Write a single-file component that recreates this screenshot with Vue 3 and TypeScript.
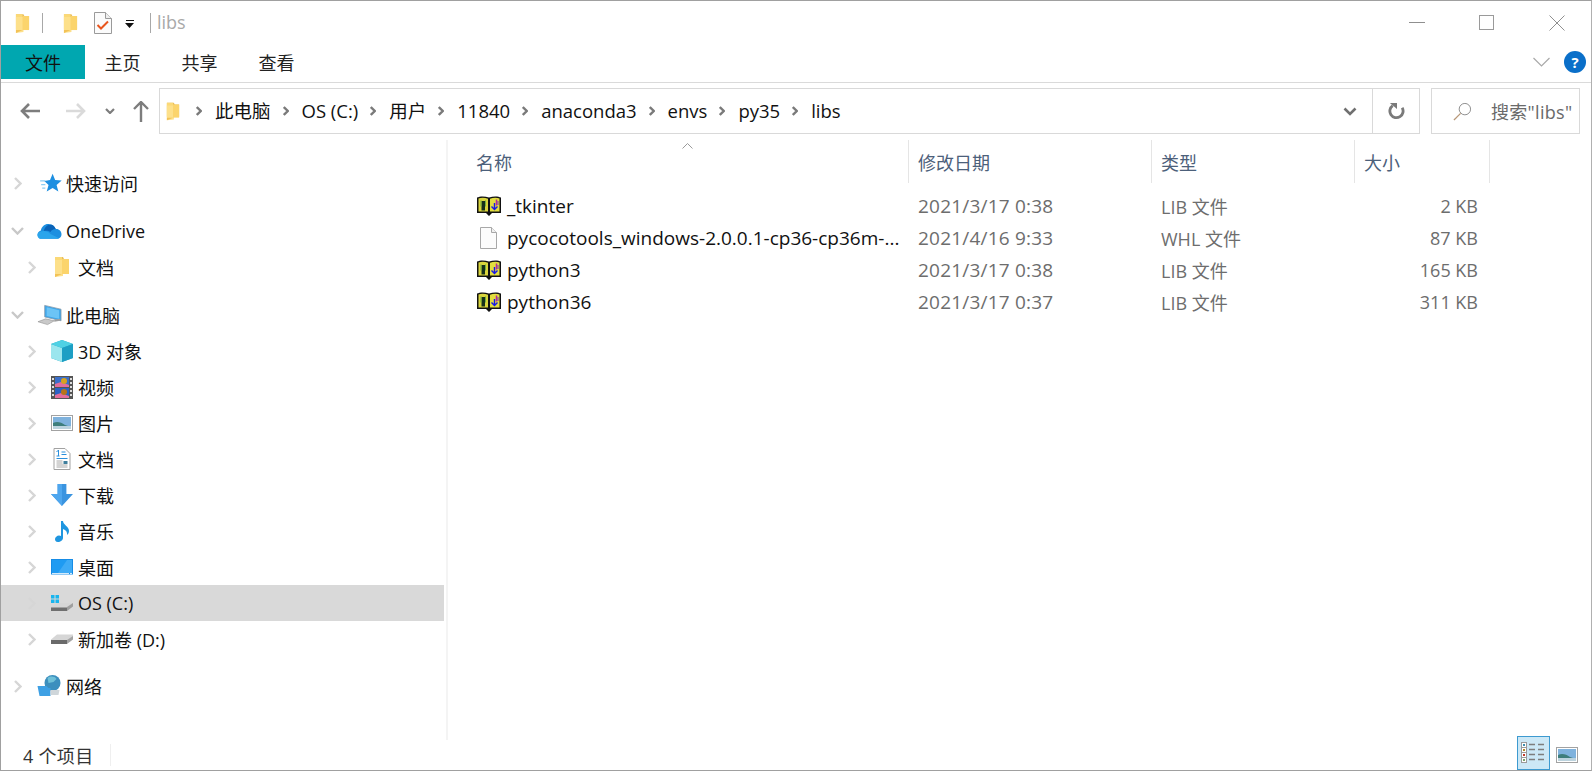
<script setup lang="ts">
interface NavRow { label: string; icon: string; level: number; open?: boolean; selected?: boolean; gap?: boolean }
const crumbs: string[] = ['此电脑', 'OS (C:)', '用户', '11840', 'anaconda3', 'envs', 'py35', 'libs']
const tabs: string[] = ['主页', '共享', '查看']
const nav: NavRow[] = [
  { label: '快速访问', icon: 'star', level: 0 },
  { label: 'OneDrive', icon: 'cloud', level: 0, open: true, gap: true },
  { label: '文档', icon: 'folder', level: 1 },
  { label: '此电脑', icon: 'pc', level: 0, open: true, gap: true },
  { label: '3D 对象', icon: 'cube', level: 1 },
  { label: '视频', icon: 'film', level: 1 },
  { label: '图片', icon: 'photo', level: 1 },
  { label: '文档', icon: 'doc', level: 1 },
  { label: '下载', icon: 'download', level: 1 },
  { label: '音乐', icon: 'music', level: 1 },
  { label: '桌面', icon: 'desktop', level: 1 },
  { label: 'OS (C:)', icon: 'osdrive', level: 1, selected: true },
  { label: '新加卷 (D:)', icon: 'drive', level: 1 },
  { label: '网络', icon: 'net', level: 0, gap: true },
]
const files = [
  { name: '_tkinter', icon: 'book', date: '2021/3/17 0:38', type: 'LIB 文件', size: '2 KB' },
  { name: 'pycocotools_windows-2.0.0.1-cp36-cp36m-...', icon: 'blank', date: '2021/4/16 9:33', type: 'WHL 文件', size: '87 KB' },
  { name: 'python3', icon: 'book', date: '2021/3/17 0:38', type: 'LIB 文件', size: '165 KB' },
  { name: 'python36', icon: 'book', date: '2021/3/17 0:37', type: 'LIB 文件', size: '311 KB' },
]
const headers: string[] = ['名称', '修改日期', '类型', '大小']
</script>

<template>
  <div class="window">
    <svg class="defs" aria-hidden="true">
      <symbol id="folder" viewBox="0 0 16 22">
        <path d="M1 1h8l1 2h5v14H1z" fill="#e8bd5c" />
        <path d="M1 1h7v17H1z" fill="#fbd977" />
        <path d="M1 4h8v16l-8 1z" fill="#fde08a" />
        <path d="M8 3h7v15H8z" fill="#fbd46c" />
        <path d="M1 21l7-3H1z" fill="#f2c257" />
      </symbol>
      <symbol id="check" viewBox="0 0 18 22">
        <path d="M.5.5h11l6 6v15H.5z" fill="#fbfbfb" stroke="#9a9a9a" />
        <path d="M11.5.5v6h6" fill="#eee" stroke="#9a9a9a" />
        <path d="M3.5 13l3.5 3.5 7-7" fill="none" stroke="#e8551d" stroke-width="2" />
      </symbol>
      <symbol id="star" viewBox="0 0 24 20">
        <path d="M15 1l2.400 6.200 6.300.5-4.900 4.100 1.700 6.400-5.500-3.500-5.700 3.500 1.800-6.400L7 8l5.500-.8z" fill="#1d8fe1" />
        <path d="M3 8h5M4 11.500h4M5 15h3" stroke="#8ccdf4" stroke-width="1.200" />
      </symbol>
      <symbol id="cloud" viewBox="0 0 26 20">
        <path d="M3 18C0 16-.5 11 4 9.500 5 5 9 2 13 3c3 0 5 2 6.500 5 3-.5 6 2 6 5.500 0 2.500-1.500 4.500-4 4.500z" fill="#1c8fe0" />
        <path d="M7 10c1-4 4-7 7-6.500 3 0 4.500 2 5.500 4.500-3 .3-4.500 1.500-5.500 3-2-1.500-4.500-1.500-7-1z" fill="#0a63b8" />
        <path d="M3 18c-2-1-3-3-2.500-5 1-2 4-3 6.500-3 3 0 5 1 7 3l9 4.500c-1 .5-2 .5-2 .5z" fill="#2ba5ec" />
      </symbol>
      <symbol id="pc" viewBox="0 0 26 22">
        <path d="M8 1l17 4v12L8 13z" fill="#3ea6ea" stroke="#8a9aa8" stroke-width=".8" />
        <path d="M10 3l13 3v9L10 12z" fill="#6cc4f6" />
        <path d="M1 18l8-3 9 2-7 4z" fill="#c9c9c9" stroke="#8e8e8e" stroke-width=".6" />
        <path d="M18 16l6-1v2l-6 1z" fill="#9f9f9f" />
      </symbol>
      <symbol id="cube" viewBox="0 0 22 22">
        <path d="M11 0l11 4v14l-11 4L0 18V4z" fill="#2aa7c4" />
        <path d="M0 4l11 4v14L0 18z" fill="#9be6ee" />
        <path d="M11 0l11 4-11 4L0 4z" fill="#4fd1e4" />
        <path d="M11 8l11-4v14l-11 4z" fill="#1d9fc4" />
      </symbol>
      <symbol id="film" viewBox="0 0 22 23">
        <rect width="22" height="23" fill="#555" />
        <rect x="4" y="1" width="14" height="10" fill="#3b6fc9" />
        <rect x="4" y="12" width="14" height="10" fill="#2b62c4" />
        <path d="M4 8l6-2 8 3v2H4zM4 19l6-2 8 3v2H4z" fill="#e26d9c" />
        <circle cx="13" cy="5" r="3" fill="#d8a21f" />
        <circle cx="13" cy="16" r="3" fill="#b8741a" />
        <path d="M1 2h2v2H1zM1 6h2v2H1zM1 10h2v2H1zM1 14h2v2H1zM1 18h2v2H1zM19 2h2v2h-2zM19 6h2v2h-2zM19 10h2v2h-2zM19 14h2v2h-2zM19 18h2v2h-2z" fill="#ddd" />
      </symbol>
      <symbol id="photo" viewBox="0 0 22 16">
        <rect x=".5" y=".5" width="21" height="15" fill="#fff" stroke="#a2a2a2" />
        <rect x="2" y="2" width="18" height="12" fill="#7fb2dd" />
        <path d="M2 8c4-2 8-1 12 2 2 1 4 1 6 1v3H2z" fill="#3e7e7c" />
        <path d="M2 11h18v3H2z" fill="#bcd3de" />
      </symbol>
      <symbol id="doc" viewBox="0 0 17 22">
        <path d="M.5.500h11l5 5v16H.5z" fill="#fff" stroke="#a2a2a2" />
        <path d="M3 4l2-2v6M3 8h3M8 4h4M8 6.500h5M3 10.500h11" stroke="#2a8fdc" fill="none" />
        <path d="M3 13h6M3 15h6M3 17h11M3 19h11" stroke="#a8a8a8" />
        <rect x="10" y="13" width="4" height="3" fill="#3e7e9c" />
      </symbol>
      <symbol id="download" viewBox="0 0 20 20">
        <path d="M6 0h8v9h6L10 20 0 9h6z" fill="#3a94e0" />
        <path d="M6 0h4v20L0 9h6z" fill="#4ea6ee" />
      </symbol>
      <symbol id="music" viewBox="0 0 16 22">
        <path d="M7 1h2c0 4 6 5 6 10 0 2-1 3-2 4 .5-3-1-5-4-6v9c0 2-2.500 4-5 4S1 20.500 1 19s2-3.500 4-3.500c1 0 1.500.2 2 .5z" fill="#1f96e0" />
      </symbol>
      <symbol id="desktop" viewBox="0 0 22 16">
        <rect width="22" height="15.500" fill="#168ce6" />
        <path d="M1 1h20v13H1z" fill="#1f9bf2" />
        <path d="M7 14L16 1h5v13z" fill="#3eabf6" />
        <path d="M1 14.600h20" stroke="#e8f4fc" stroke-dasharray="17 1 2" />
      </symbol>
      <symbol id="osdrive" viewBox="0 0 22 18">
        <path d="M0 13l6-4h16v3l-6 4H0z" fill="#d6d6d6" />
        <path d="M0 13.500h16V17H0z" fill="#6f6f6f" />
        <path d="M16 13l6-4v3.500L16 17z" fill="#9f9f9f" />
        <path d="M0 1h3.500v3.500H0zM4.500 1H8v3.500H4.500zM0 5.500h3.500V9H0zM4.500 5.500H8V9H4.500z" fill="#19b5ee" />
      </symbol>
      <symbol id="drive" viewBox="0 0 22 12">
        <path d="M0 6.500l6-5h16v3l-6 5H0z" fill="#d6d6d6" />
        <path d="M0 7h16v4H0z" fill="#6a6a6a" />
        <path d="M16 7l6-4v3.500L16 11z" fill="#a4a4a4" />
      </symbol>
      <symbol id="net" viewBox="0 0 24 22">
        <circle cx="15" cy="8" r="8" fill="#3c8fbe" />
        <path d="M10 3c3-2 7-2 9 1l-3 3-5 1z" fill="#6fc0d8" />
        <path d="M0 11h9l2 2h2v8H2z" fill="#3ea0e4" />
        <path d="M13 15h9l-1 5h-8z" fill="#cfd6da" />
      </symbol>
      <symbol id="book" viewBox="0 0 24 20">
        <path d="M0 1.500C3 0 8 0 12 1.500 16 0 21 0 24 1.500V17h-9l-3 3-3-3H0z" fill="#111" />
        <path d="M1.500 2.500C4 1.500 8 1.500 11 2.800V15.500H1.500z" fill="#d9d53c" />
        <path d="M13 2.800c3-1.300 7-1.300 9.500-.3v13H13z" fill="#e2de3e" />
        <path d="M4.500 5h3.500v9.500H4.500z" fill="#16301a" />
        <path d="M4 4.500v6M8.500 4.500v6" stroke="#6faf3c" />
        <path d="M17.500 7v6M14.500 10.500l3 3 3-3" stroke="#1818e6" stroke-width="1.400" fill="none" />
        <path d="M19.500 3.500v6" stroke="#b6279c" stroke-width="1.500" />
        <path d="M21 5v4" stroke="#7a2ac0" />
      </symbol>
      <symbol id="blank" viewBox="0 0 17 22">
        <path d="M.5.500h11l5 5v16H.5z" fill="#fcfcfc" stroke="#a8a8a8" />
        <path d="M11.500.500v5h5" fill="#f0f0f0" stroke="#a8a8a8" />
      </symbol>
    </svg>

    <header class="titlebar">
      <svg class="qa-folder"><use href="#folder" /></svg>
      <i class="qa-sep first"></i>
      <svg class="qa-folder second"><use href="#folder" /></svg>
      <svg class="qa-check"><use href="#check" /></svg>
      <svg class="qa-drop" viewBox="0 0 10 8"><path d="M1 0h8v1H1zM0 3h9L4.500 8z" fill="#111" /></svg>
      <i class="qa-sep"></i>
      <span class="title">libs</span>
      <div class="win-controls">
        <svg class="ctl" viewBox="0 0 16 16"><path d="M0 7.500h16" stroke="#8f8f8f" /></svg>
        <svg class="ctl" viewBox="0 0 16 16"><rect x=".5" y=".5" width="14" height="14" fill="none" stroke="#9a9a9a" /></svg>
        <svg class="ctl" viewBox="0 0 16 16"><path d="M.5.500l15 15M15.500.500l-15 15" stroke="#8f8f8f" /></svg>
      </div>
    </header>

    <div class="ribbon">
      <div class="tab-file">文件</div>
      <div v-for="t in tabs" :key="t" class="tab">{{ t }}</div>
      <div class="ribbon-right">
        <svg class="rib-chev" viewBox="0 0 17 10"><path d="M.5 1l8 8 8-8" fill="none" stroke="#a9a9a9" stroke-width="1.200" /></svg>
        <span class="help">?</span>
      </div>
    </div>

    <div class="addr-row">
      <div class="nav-btns">
        <svg class="arrow back" viewBox="0 0 20 16"><path d="M9 1L2 8l7 7M2 8h18" fill="none" stroke="#7d7d7d" stroke-width="2.600" /></svg>
        <svg class="arrow fwd" viewBox="0 0 20 16"><path d="M11 1l7 7-7 7M18 8H0" fill="none" stroke="#dadada" stroke-width="2.600" /></svg>
        <svg class="recent" viewBox="0 0 10 6"><path d="M1 1l4 4 4-4" fill="none" stroke="#7d7d7d" stroke-width="2.200" /></svg>
        <svg class="up" viewBox="0 0 16 21"><path d="M1 8l7-7 7 7M8 1v20" fill="none" stroke="#7d7d7d" stroke-width="2.400" /></svg>
      </div>
      <div class="addr">
        <svg class="addr-folder"><use href="#folder" /></svg>
        <div class="crumbs">
          <svg class="crumb-chev first-chev" viewBox="0 0 6 10"><path d="M.8 1l4 4-4 4" fill="none" stroke="#7a7a7a" stroke-width="2.400" /></svg>
          <template v-for="(c, i) in crumbs" :key="i">
            <span class="crumb">{{ c }}</span>
            <svg v-if="i < crumbs.length - 1" class="crumb-chev" viewBox="0 0 6 10"><path d="M.8 1l4 4-4 4" fill="none" stroke="#7a7a7a" stroke-width="2.400" /></svg>
          </template>
        </div>
        <svg class="addr-drop" viewBox="0 0 14 9"><path d="M1.500 1.500L7 7l5.500-5.500" fill="none" stroke="#707070" stroke-width="2.600" /></svg>
        <div class="refresh">
          <svg viewBox="0 0 18 19" width="17" height="18"><path d="M5 3.800A7 7 0 1 0 15 6" fill="none" stroke="#7a7a7a" stroke-width="3" /><path d="M2 1h7.500v6.500z" fill="#7a7a7a" /></svg>
        </div>
      </div>
      <div class="search">
        <svg class="search-ico" viewBox="0 0 20 20"><circle cx="12.500" cy="7.500" r="6" fill="none" stroke="#8a8a8a" /><path d="M8 12l-7 7" stroke="#b89878" stroke-width="1.300" /></svg>
        <span>搜索"libs"</span>
      </div>
    </div>

    <div class="body">
      <aside class="sidebar">
        <div
          v-for="(r, i) in nav"
          :key="i"
          class="nav-row"
          :class="[`lv${r.level}`, { selected: r.selected, gap: r.gap }]"
        >
          <span class="twist">
            <svg v-if="r.open" class="tw-open" viewBox="0 0 13 8"><path d="M1 1l5.500 5.500L12 1" fill="none" stroke="#c8c8c8" stroke-width="2.400" /></svg>
            <svg v-else class="tw-closed" viewBox="0 0 8 13"><path d="M1 1l5.500 5.500L1 12" fill="none" stroke="#d6d6d6" stroke-width="2.400" /></svg>
          </span>
          <svg class="nav-ico" :class="`i-${r.icon}`"><use :href="`#${r.icon}`" /></svg>
          <span class="nav-label">{{ r.label }}</span>
        </div>
      </aside>

      <main class="content">
        <svg class="sort" viewBox="0 0 11 6"><path d="M.5 5.500l5-5 5 5" fill="none" stroke="#9a9a9a" /></svg>
        <div class="grid head">
          <div v-for="h in headers" :key="h" class="hcell">{{ h }}</div>
        </div>
        <div class="files">
          <div v-for="f in files" :key="f.name" class="grid file">
            <div class="fname">
              <svg class="f-ico" :class="`f-${f.icon}`"><use :href="`#${f.icon}`" /></svg>
              <span>{{ f.name }}</span>
            </div>
            <div class="meta date">{{ f.date }}</div>
            <div class="meta type">{{ f.type }}</div>
            <div class="meta size">{{ f.size }}</div>
          </div>
        </div>
      </main>
    </div>

    <footer class="status">
      <span class="count">4 个项目</span>
      <i class="status-sep"></i>
      <div class="views">
        <div class="view active">
          <svg viewBox="0 0 25 22" width="25" height="22">
            <g fill="#fff" stroke="#9a9a9a"><rect x=".5" y=".5" width="5" height="5" /><rect x=".5" y="5.500" width="5" height="5" /><rect x=".5" y="10.500" width="5" height="5" /><rect x=".5" y="15.500" width="5" height="5" /></g>
            <path d="M2 2h2v2H2z" fill="#3a8fb0" /><path d="M2 7h2v2H2z" fill="#b08a2a" /><path d="M2 12h2v2H2z" fill="#c0392b" /><path d="M2 17h2v2H2z" fill="#7aa26a" />
            <path d="M8 2.500h6M17 2.500h6M8 7.500h6M17 7.500h6M8 12.500h6M17 12.500h6M8 17.500h6M17 17.500h6" stroke="#7d7d7d" stroke-width="1.400" />
          </svg>
        </div>
        <svg class="view-photo"><use href="#photo" /></svg>
      </div>
    </footer>
  </div>
</template>

<style>
html, body { margin: 0; padding: 0; background: #fff; overflow: hidden; }
</style>

<style scoped>
.window {
  width: 1592px;
  height: 771px;
  box-sizing: border-box;
  border: 1px solid #a0a0a0;
  border-right-color: #b0b0b0;
  display: flex;
  flex-direction: column;
  background: #fff;
  font-family: "Open Sans", "Noto Sans CJK SC", sans-serif;
  font-size: 18px;
  color: #111;
  overflow: hidden;
}
.defs { position: absolute; width: 0; height: 0; }
svg { display: block; flex: none; }

/* title bar */
.titlebar { height: 44px; flex: none; display: flex; align-items: center; padding-left: 14px; }
.qa-folder { width: 15px; height: 21px; }
.qa-folder.second { margin-left: 20px; }
.qa-sep { width: 1px; height: 20px; background: #a8a8a8; margin-left: 12px; }
.qa-check { width: 18px; height: 22px; margin-left: 16px; }
.qa-drop { width: 10px; height: 8px; margin-left: 13px; margin-top: 2px; }
.qa-sep:not(.first) { margin-left: 15px; }
.title { margin-left: 6px; margin-top: -2px; color: #a9a9a9; }
.win-controls { margin-left: auto; display: flex; margin-right: 26px; gap: 54px; }
.ctl { width: 16px; height: 16px; }

/* ribbon */
.ribbon { height: 38px; flex: none; display: flex; border-bottom: 1px solid #dadada; box-sizing: border-box; }
.tab-file {
  width: 84px; height: 34px; background: #00a7b0; color: #111; margin-right: -1px;
  display: flex; align-items: center; justify-content: center;
}
.tab { width: 77px; height: 34px; display: flex; align-items: center; justify-content: center; color: #222; }
.ribbon-right { margin-left: auto; display: flex; align-items: center; height: 36px; margin-top: -1px; padding-right: 5px; gap: 14px; }
.rib-chev { width: 17px; height: 10px; }
.help {
  width: 22px; height: 22px; border-radius: 50%; background: #0a6fc9; color: #fff;
  font: bold 15px/22px "Open Sans", sans-serif; text-align: center;
}

/* address row */
.addr-row { height: 57px; flex: none; display: flex; align-items: flex-start; padding-top: 5px; box-sizing: border-box; }
.nav-btns { width: 158px; height: 46px; display: flex; align-items: center; flex: none; padding-left: 19px; box-sizing: border-box; }
.arrow { width: 20px; height: 16px; }
.fwd { margin-left: 26px; }
.recent { width: 10px; height: 6px; margin-left: 19px; }
.up { width: 16px; height: 21px; margin-left: 18px; }
.addr {
  width: 1261px; height: 46px; box-sizing: border-box; border: 1px solid #d9d9d9;
  display: flex; align-items: center; padding-left: 6px; flex: none;
}
.addr-folder { width: 14px; height: 21px; }
.crumbs { display: flex; align-items: center; margin-left: 15px; margin-top: -2px; font-size: 18.5px; }
.crumb { color: #111; white-space: nowrap; }
.crumb-chev { width: 6px; height: 10px; margin: 2px 13px 0 12px; }
.first-chev { margin: 2px 13px 0 1px; }
.addr-drop { width: 14px; height: 9px; margin-left: auto; margin-right: 15px; }
.refresh { width: 46px; height: 44px; border-left: 1px solid #d9d9d9; display: flex; align-items: center; justify-content: center; }
.search {
  margin-left: 11px; width: 149px; height: 46px; box-sizing: border-box; border: 1px solid #d9d9d9;
  display: flex; align-items: center; color: #6a6a6a; padding-left: 21px; white-space: nowrap; flex: none;
  letter-spacing: .3px;
}
.search-ico { width: 19px; height: 19px; margin-right: 19px; }

/* body */
.body { flex: 1; min-height: 0; display: flex; }
.sidebar { width: 447px; flex: none; box-sizing: border-box; padding-top: 25px; border-right: 2px solid #f4f4f4; }
.nav-row { height: 36px; display: flex; align-items: center; white-space: nowrap; }
.nav-row.gap { margin-top: 12px; }
.nav-row.gap:last-child { margin-top: 11px; }
.nav-row.selected { background: #d9d9d9; margin-right: 2px; }
.twist { width: 13px; display: flex; justify-content: center; flex: none; }
.tw-open { width: 13px; height: 8px; }
.tw-closed { width: 8px; height: 13px; }
.lv0 .twist { margin-left: 10px; }
.lv1 .twist { margin-left: 24px; }
.nav-ico { flex: none; }
.lv0 .nav-ico { width: 25px; height: 22px; margin-left: 13px; margin-right: 4px; }
.lv1 .nav-ico { width: 22px; height: 22px; margin-left: 13px; margin-right: 5px; }
.lv1 .i-film { height: 23px; }
.nav-label { color: #111; }

/* content */
.content { flex: 1; min-width: 0; position: relative; }
.sort { position: absolute; left: 234px; top: 3px; width: 11px; height: 6px; }
.grid { display: grid; grid-template-columns: 461px 243px 203px 135px; }
.head { height: 43px; }
.hcell { padding-left: 28px; display: flex; align-items: center; color: #4c607a; border-right: 1px solid #e5e5e5; box-sizing: border-box; }
.hcell:nth-child(n + 2) { padding-left: 9px; }
.files { padding-top: 7px; }
.file { height: 32px; align-items: center; }
.fname { display: flex; align-items: center; padding-left: 29px; white-space: nowrap; overflow: hidden; color: #111; font-size: 19px; }
.f-ico { margin-right: 6px; flex: none; }
.f-book { width: 24px; height: 20px; }
.f-blank { width: 17px; height: 22px; margin-left: 3px; margin-right: 10px; }
.meta { color: #6d6d6d; white-space: nowrap; }
.date { padding-left: 9px; font-size: 19px; letter-spacing: .2px; }
.type { padding-left: 9px; }
.size { text-align: right; padding-right: 12px; }

/* status */
.status { height: 30px; flex: none; display: flex; align-items: center; padding-left: 22px; color: #333; }
.count { white-space: nowrap; letter-spacing: .3px; }
.status-sep { width: 1px; height: 22px; background: #efefef; margin-left: 17px; }
.views { margin-left: auto; display: flex; align-items: center; margin-right: 13px; }
.view.active {
  width: 33px; height: 34px; box-sizing: border-box; border: 1px solid #3d9ad0; background: #cce8f6;
  display: flex; align-items: center; justify-content: center; margin-top: -4px;
}
.view-photo { width: 22px; height: 16px; margin-left: 6px; }
</style>
